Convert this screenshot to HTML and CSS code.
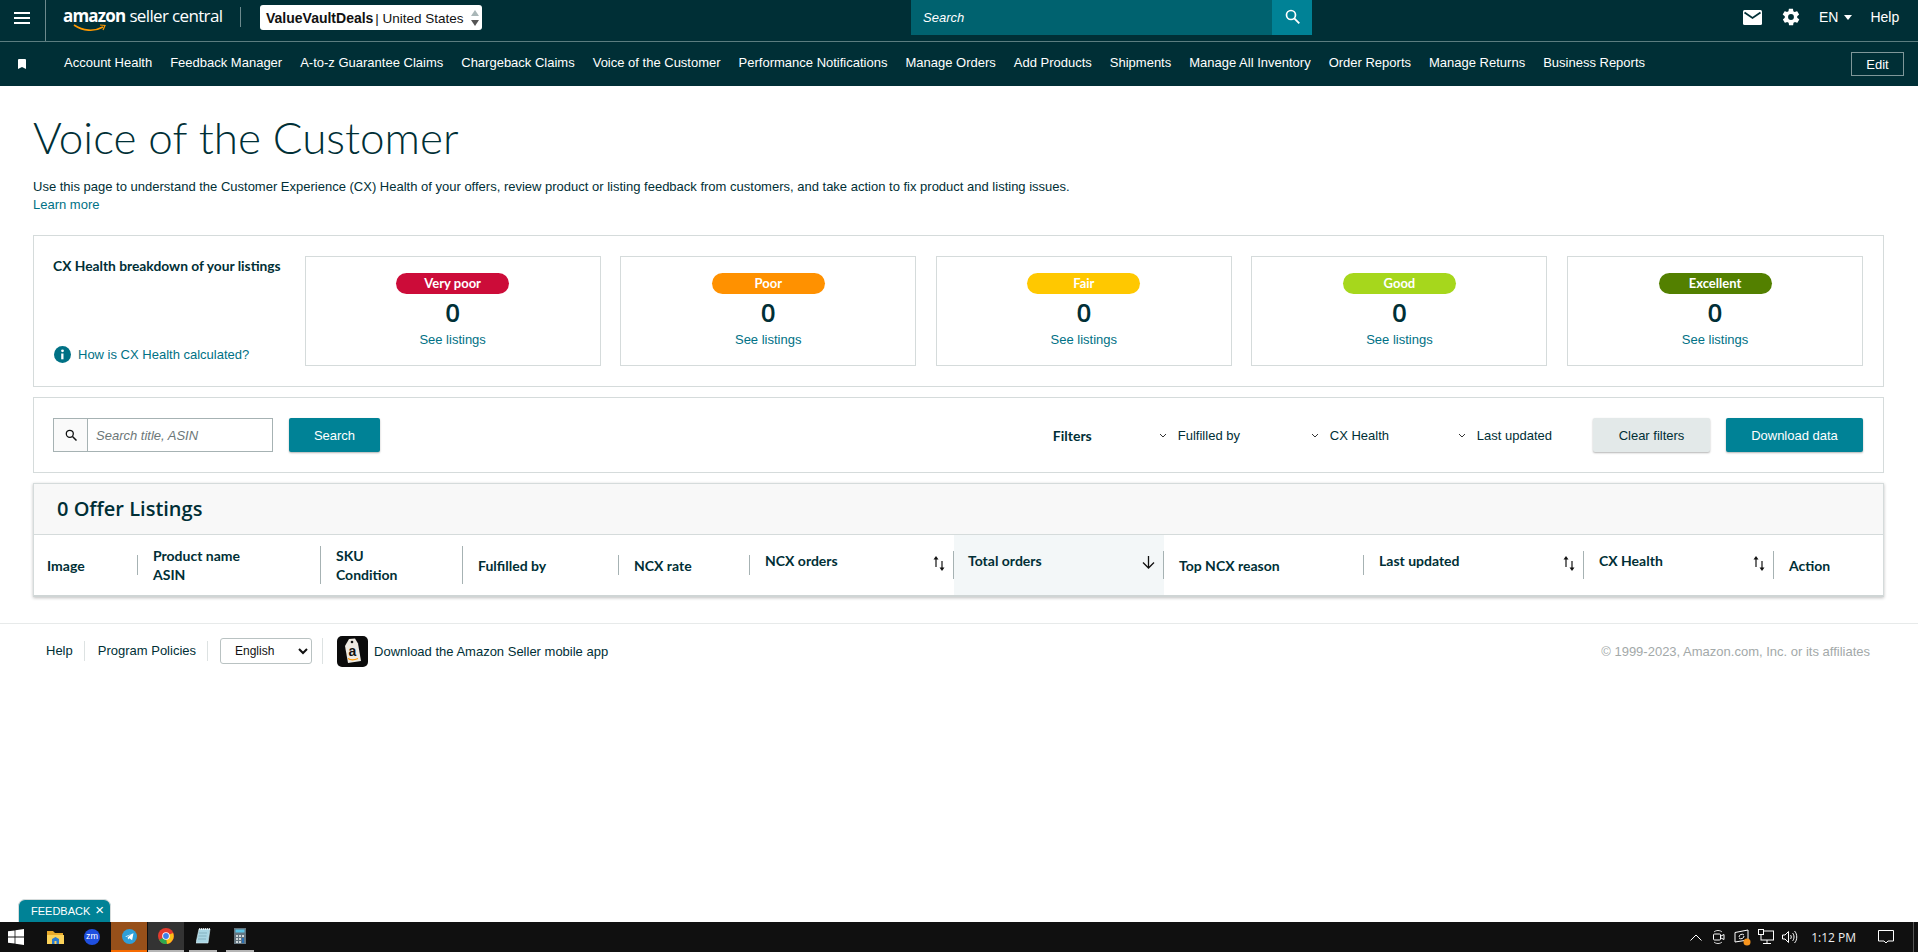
FILE: index.html
```html
<!DOCTYPE html>
<html lang="en">
  <head>
    <meta charset="UTF-8" />
    <title>Voice of the Customer</title>
    <link rel="stylesheet" href="styles.css">
  </head>
  <body>
    <header class="topbar">
      <div class="burger-cell">
        <svg class="burger" width="16" height="12" viewBox="0 0 16 12"><path d="M0 1h16M0 6h16M0 11h16" stroke="#fff" stroke-width="1.800"/></svg>
      </div>
      <div class="logo">
        <span class="logo-amazon">amazon</span>
        <span class="logo-seller">seller central</span>
        <svg class="logo-smile" width="33" height="8" viewBox="0 0 33 8"><path d="M1 1c9 6 20 7 29 2" fill="none" stroke="#f90" stroke-width="1.600"/><path d="M27 1l5 .5-2 4.500" fill="none" stroke="#f90" stroke-width="1.200"/></svg>
      </div>
      <div class="logo-divider"></div>
      <div class="account-select">
        <span><b>ValueVaultDeals</b> | United States</span>
        <span class="spinner">
          <svg width="8" height="6" viewBox="0 0 8 6"><path d="M4 0l4 6H0z" fill="#aab7b8"/></svg>
          <svg width="8" height="6" viewBox="0 0 8 6"><path d="M4 6L0 0h8z" fill="#555"/></svg>
        </span>
      </div>
      <div class="top-search">
        <div class="top-search-input">Search</div>
        <div class="top-search-btn">
          <svg width="15" height="15" viewBox="0 0 15 15"><circle cx="6" cy="6" r="4.500" fill="none" stroke="#fff" stroke-width="1.700"/><path d="M9.300 9.300l5 5" stroke="#fff" stroke-width="1.900"/></svg>
        </div>
      </div>
      <div class="top-right">
        <svg class="top-mail" width="19" height="15" viewBox="0 0 19 15"><rect width="19" height="15" rx="1.500" fill="#fff"/><path d="M1.500 2.500l8 5.500 8-5.500" fill="none" stroke="#002f36" stroke-width="1.800"/></svg>
        <svg class="top-gear" width="20" height="20" viewBox="0 0 24 24"><path fill="#fff" d="M19.400 13c0-.3.1-.6.1-1s0-.7-.1-1l2.100-1.600c.2-.2.2-.4.1-.6l-2-3.500c-.1-.2-.4-.3-.6-.2l-2.500 1c-.5-.4-1.100-.7-1.700-1l-.4-2.700c0-.2-.2-.4-.5-.4h-4c-.2 0-.5.2-.5.400l-.4 2.700c-.6.2-1.100.6-1.700 1l-2.500-1c-.2-.1-.5 0-.6.2l-2 3.500c-.1.2-.1.5.1.6L4.600 11c0 .3-.1.7-.1 1s0 .7.1 1l-2.100 1.600c-.2.2-.2.4-.1.6l2 3.500c.1.2.4.3.6.2l2.500-1c.5.4 1.100.7 1.700 1l.4 2.700c0 .2.2.4.5.4h4c.2 0 .5-.2.5-.4l.4-2.700c.6-.2 1.100-.6 1.700-1l2.500 1c.2.1.5 0 .6-.2l2-3.500c.1-.2.1-.5-.1-.6zM12 15.500a3.500 3.500 0 1 1 0-7 3.500 3.500 0 0 1 0 7z"/></svg>
        <span class="top-lang">EN</span>
        <span class="top-caret"></span>
        <span class="top-help">Help</span>
      </div>
    </header>

    <nav class="navbar">
      <svg class="nav-mark" width="8" height="10" viewBox="0 0 8 10"><path d="M0 1a1 1 0 0 1 1-1h6a1 1 0 0 1 1 1v9L4 8 0 10z" fill="#fff"/></svg>
      <div class="nav-links">
        <a>Account Health</a>
        <a>Feedback Manager</a>
        <a>A-to-z Guarantee Claims</a>
        <a>Chargeback Claims</a>
        <a>Voice of the Customer</a>
        <a>Performance Notifications</a>
        <a>Manage Orders</a>
        <a>Add Products</a>
        <a>Shipments</a>
        <a>Manage All Inventory</a>
        <a>Order Reports</a>
        <a>Manage Returns</a>
        <a>Business Reports</a>
      </div>
      <button class="edit-btn">Edit</button>
    </nav>

    <main class="content">
      <h1 class="page-title">Voice of the Customer</h1>
      <p class="page-desc">Use this page to understand the Customer Experience (CX) Health of your offers, review product or listing feedback from customers, and take action to fix product and listing issues.</p>
      <a class="link learn-more">Learn more</a>

      <section class="panel health-panel">
        <div class="health-side">
          <div class="health-title">CX Health breakdown of your listings</div>
          <a class="link health-help">
            <svg width="17" height="17" viewBox="0 0 17 17"><circle cx="8.500" cy="8.500" r="8.500" fill="#007185"/><circle cx="8.500" cy="4.800" r="1.400" fill="#fff"/><path d="M7.200 7.500h2.300v5.800H7.200z" fill="#fff"/></svg>
            How is CX Health calculated?
          </a>
        </div>
        <div class="health-cards">
          <div class="health-card">
            <span class="pill pill-verypoor">Very poor</span>
            <span class="health-count">0</span>
            <a class="link">See listings</a>
          </div>
          <div class="health-card">
            <span class="pill pill-poor">Poor</span>
            <span class="health-count">0</span>
            <a class="link">See listings</a>
          </div>
          <div class="health-card">
            <span class="pill pill-fair">Fair</span>
            <span class="health-count">0</span>
            <a class="link">See listings</a>
          </div>
          <div class="health-card">
            <span class="pill pill-good">Good</span>
            <span class="health-count">0</span>
            <a class="link">See listings</a>
          </div>
          <div class="health-card">
            <span class="pill pill-excellent">Excellent</span>
            <span class="health-count">0</span>
            <a class="link">See listings</a>
          </div>
        </div>
      </section>

      <section class="panel filter-panel">
        <div class="search-box">
          <span class="search-addon">
            <svg width="12" height="12" viewBox="0 0 12 12"><circle cx="4.800" cy="4.800" r="3.500" fill="none" stroke="#0f1111" stroke-width="1.300"/><path d="M7.500 7.500l4 4" stroke="#0f1111" stroke-width="1.500"/></svg>
          </span>
          <span class="search-hint">Search title, ASIN</span>
        </div>
        <button class="btn btn-teal btn-search">Search</button>
        <div class="filters">
          <span class="filters-label">Filters</span>
          <span class="filter filter-fulfilled"><svg width="8" height="5" viewBox="0 0 8 5"><path d="M1 1l3 3 3-3" fill="none" stroke="#333" stroke-width="1"/></svg>Fulfilled by</span>
          <span class="filter filter-health"><svg width="8" height="5" viewBox="0 0 8 5"><path d="M1 1l3 3 3-3" fill="none" stroke="#333" stroke-width="1"/></svg>CX Health</span>
          <span class="filter filter-updated"><svg width="8" height="5" viewBox="0 0 8 5"><path d="M1 1l3 3 3-3" fill="none" stroke="#333" stroke-width="1"/></svg>Last updated</span>
          <button class="btn btn-grey">Clear filters</button>
          <button class="btn btn-teal btn-download">Download data</button>
        </div>
      </section>

      <section class="listings">
        <div class="listings-head">0 Offer Listings</div>
        <div class="listings-cols">
          <div class="col"><div class="col-in col-short">Image</div></div>
          <div class="col"><div class="col-in col-tall">Product name<br>ASIN</div></div>
          <div class="col"><div class="col-in col-tall">SKU<br>Condition</div></div>
          <div class="col"><div class="col-in col-short">Fulfilled by</div></div>
          <div class="col"><div class="col-in col-short">NCX rate</div></div>
          <div class="col"><div class="col-in col-sort">NCX orders
            <svg class="sort-icon" width="12" height="15" viewBox="0 0 12 15"><path d="M3 2v9" stroke="#111" stroke-width="1.200"/><path d="M3 0l2.500 3.500h-5z" fill="#111"/><path d="M9 5v8" stroke="#111" stroke-width="1.200"/><path d="M9 15l-2.500-3.500h5z" fill="#111"/></svg>
          </div></div>
          <div class="col col-active"><div class="col-in col-sort">Total orders
            <svg class="sort-icon" width="13" height="13" viewBox="0 0 13 13"><path d="M6.500 0v12M1 6.500l5.500 5.500L12 6.500" fill="none" stroke="#111" stroke-width="1.300"/></svg>
          </div></div>
          <div class="col"><div class="col-in col-short">Top NCX reason</div></div>
          <div class="col"><div class="col-in col-sort">Last updated
            <svg class="sort-icon" width="12" height="15" viewBox="0 0 12 15"><path d="M3 2v9" stroke="#111" stroke-width="1.200"/><path d="M3 0l2.500 3.500h-5z" fill="#111"/><path d="M9 5v8" stroke="#111" stroke-width="1.200"/><path d="M9 15l-2.500-3.500h5z" fill="#111"/></svg>
          </div></div>
          <div class="col"><div class="col-in col-sort">CX Health
            <svg class="sort-icon" width="12" height="15" viewBox="0 0 12 15"><path d="M3 2v9" stroke="#111" stroke-width="1.200"/><path d="M3 0l2.500 3.500h-5z" fill="#111"/><path d="M9 5v8" stroke="#111" stroke-width="1.200"/><path d="M9 15l-2.500-3.500h5z" fill="#111"/></svg>
          </div></div>
          <div class="col col-last"><div class="col-in col-short">Action</div></div>
        </div>
      </section>
    </main>

    <footer class="footer">
      <a class="footer-link footer-help">Help</a>
      <a class="footer-link">Program Policies</a>
      <div class="footer-lang">
        <select class="lang-select"><option>English</option></select>
      </div>
      <svg class="app-icon" width="31" height="31" viewBox="0 0 31 31"><rect width="31" height="31" rx="5" fill="#0b0b0b"/><path d="M12 3l6-.5 3 5 3 17.500-13 2-3-17z" fill="#eeeae2"/><circle cx="15" cy="6" r="1.300" fill="#111"/><text class="app-icon-a" x="11.500" y="20">a</text><path d="M11 22.500c3 2 6 1.800 10 0" fill="none" stroke="#f90" stroke-width="1.300"/></svg>
      <a class="footer-app">Download the Amazon Seller mobile app</a>
      <span class="footer-copy">© 1999-2023, Amazon.com, Inc. or its affiliates</span>
    </footer>

    <div class="spacer"></div>

    <div class="taskbar-wrap">
      <div class="feedback-tab">FEEDBACK <span class="feedback-x">×</span></div>
      <div class="taskbar">
        <div class="task task-start">
          <svg width="16" height="16" viewBox="0 0 16 16"><path fill="#fff" d="M0 2.300l6.600-.9v6.200H0zM7.400 1.300L16 0v7.600H7.400zM0 8.400h6.600v6.200L0 13.700zM7.400 8.400H16V16l-8.600-1.200z"/></svg>
        </div>
        <div class="task task-folder">
          <svg width="17" height="15" viewBox="0 0 17 15"><path d="M0 1h6l2 2h8v11H0z" fill="#e6a92c"/><path d="M0 5h17v9H0z" fill="#fbd25a"/><path d="M5 14V9l3.500-2L12 9v5H9.500v-3h-2v3z" fill="#2a7bd1"/></svg>
        </div>
        <div class="task task-zoom">
          <span class="zm-icon">zm</span>
        </div>
        <div class="task task-telegram">
          <svg width="15" height="15" viewBox="0 0 15 15"><circle cx="7.500" cy="7.500" r="7.500" fill="#2f9fd8"/><path d="M3 7.500l8.500-3.300-1.400 7-2.700-2-1.400 1.300-.3-2.300 4-3.300-5 2.900z" fill="#fff"/></svg>
        </div>
        <div class="task task-chrome">
          <svg width="16" height="16" viewBox="0 0 16 16"><circle cx="8" cy="8" r="8" fill="#e33b2e"/><path d="M8 8L1 12a8 8 0 0 0 8 4z" fill="#2da94f"/><path d="M8 8l1 8a8 8 0 0 0 6-11z" fill="#fbc116"/><circle cx="8" cy="8" r="3.800" fill="#fff"/><circle cx="8" cy="8" r="2.900" fill="#3f7fe8"/></svg>
        </div>
        <div class="task task-notepad">
          <svg width="15" height="16" viewBox="0 0 15 16"><path d="M3 1h11l-2 14H0z" fill="#a9d6e4" stroke="#d8eef4" stroke-width=".6"/><path d="M3 1h11" stroke="#fff" stroke-width="1.500" stroke-dasharray="1 1"/><path d="M3 5h8M2.500 8h8M2 11h8" stroke="#6f9aa8" stroke-width=".6"/></svg>
        </div>
        <div class="task task-calc">
          <svg width="12" height="16" viewBox="0 0 12 16"><rect width="12" height="16" fill="#63747f"/><rect x="1.500" y="1.500" width="9" height="3" fill="#5cc4e6"/><path d="M2 7h2v2H2zM5 7h2v2H5zM8 7h2v2H8zM2 10h2v2H2zM5 10h2v2H5zM2 13h2v2H2zM5 13h2v2H5z" fill="#cfd8dc"/><path d="M8 10h2v5H8z" fill="#2a6fb3"/></svg>
        </div>
        <div class="tray">
          <svg class="tray-chevron" width="12" height="7" viewBox="0 0 12 7"><path d="M.5 6.500L6 1l5.500 5.500" fill="none" stroke="#fff" stroke-width="1"/></svg>
          <svg class="tray-cam" width="12" height="16" viewBox="0 0 12 16"><path d="M1 3c2-2 6-2 8 0M1 13c2 2 6 2 8 0" fill="none" stroke="#ddd" stroke-width="1"/><rect x=".5" y="5" width="7" height="6" rx="1" fill="none" stroke="#fff"/><path d="M8 7l3-1.500v5L8 9" fill="none" stroke="#fff"/></svg>
          <svg class="tray-sync" width="17" height="17" viewBox="0 0 17 17"><path d="M1 3.500L14 1v10L1 13z" fill="none" stroke="#fff" stroke-width="1"/><path d="M5 8a3 3 0 0 1 5-2M10 7a3 3 0 0 1-5 2" fill="none" stroke="#fff"/><circle cx="13" cy="13" r="3.500" fill="#f7941d"/></svg>
          <svg class="tray-net" width="16" height="16" viewBox="0 0 16 16"><rect x="3" y="2" width="12.500" height="9" fill="none" stroke="#fff"/><rect x=".5" y=".5" width="5" height="5" fill="#101010" stroke="#fff"/><path d="M9 11v3M5 14.500h8" stroke="#fff"/></svg>
          <svg class="tray-vol" width="16" height="14" viewBox="0 0 16 14"><path d="M.5 5v4h2.500l3.500 3.500v-11L3 5z" fill="none" stroke="#fff"/><path d="M8.500 5c1 1 1 3 0 4M10.500 3c2 2 2 6 0 8M12.500 1c3 3 3 9 0 12" fill="none" stroke="#fff"/></svg>
          <span class="tray-time">1:12 PM</span>
          <svg class="tray-note" width="16" height="14" viewBox="0 0 16 14"><path d="M.5.500h15v10.500H10l-2 2-2-2H.5z" fill="none" stroke="#fff"/></svg>
          <span class="tray-end"></span>
        </div>
      </div>
    </div>
  </body>
</html>
```

FILE: styles.css
```css
* {
  box-sizing: border-box;
}

html,
body {
  height: 100%;
}

body {
  margin: 0;
  display: flex;
  flex-direction: column;
  height: 952px;
  overflow: hidden;
  background: #fff;
  color: #002f36;
  font-family: "Liberation Sans", Arial, sans-serif;
  font-size: 13px;
}

/* top bar */
.topbar {
  display: flex;
  align-items: flex-start;
  height: 42px;
  background: #002f36;
  border-bottom: 1px solid #5c7d80;
  color: #fff;
}

.burger-cell {
  width: 46px;
  height: 41px;
  padding: 12px 0 0 14px;
  border-right: 1px solid #6d8a8d;
}

.burger {
  display: block;
}

.logo {
  position: relative;
  display: flex;
  align-items: baseline;
  gap: 4px;
  width: 159px;
  margin: 4px 0 0 17px;
  white-space: nowrap;
}

.logo-amazon {
  font-family: "Open Sans", sans-serif;
  font-size: 17px;
  font-weight: 700;
  letter-spacing: -0.8px;
}

.logo-seller {
  font-family: "Open Sans", sans-serif;
  font-size: 17px;
  font-weight: 400;
  letter-spacing: -0.65px;
}

.logo-smile {
  position: absolute;
  left: 10px;
  top: 20px;
}

.logo-divider {
  width: 1px;
  height: 20px;
  margin: 7px 19px 0 18px;
  background: #6d8a8d;
}

.account-select {
  display: flex;
  align-items: center;
  justify-content: space-between;
  width: 222px;
  height: 25px;
  margin-top: 5px;
  padding: 0 3px 0 6px;
  background: #fff;
  border-radius: 3px;
  color: #111;
  font-size: 13.5px;
  white-space: nowrap;
}

.account-select b {
  margin-right: -2px;
  font-size: 14px;
  font-weight: 700;
}

.spinner {
  display: flex;
  flex-direction: column;
  gap: 4px;
}

.spinner svg {
  display: block;
}

.top-search {
  display: flex;
  height: 35px;
  margin-left: 429px;
}

.top-search-input {
  width: 361px;
  padding: 10px 0 0 12px;
  background: #00626f;
  font-style: italic;
}

.top-search-btn {
  width: 40px;
  padding: 9px 0 0 13px;
  background: #008296;
}

.top-right {
  display: flex;
  align-items: center;
  height: 34px;
  margin-left: 431px;
  font-size: 14px;
}

.top-gear {
  margin-left: 19px;
}

.top-lang {
  margin-left: 18px;
}

.top-caret {
  width: 0;
  height: 0;
  margin-left: 6px;
  border-top: 5px solid #fff;
  border-left: 4px solid transparent;
  border-right: 4px solid transparent;
}

.top-help {
  margin-left: 18px;
}

/* nav */
.navbar {
  display: flex;
  align-items: center;
  height: 44px;
  padding: 0 14px 0 18px;
  background: #002f36;
  color: #fff;
}

.nav-links {
  display: flex;
  gap: 18px;
  flex: 1;
  margin-left: 38px;
  padding-bottom: 3px;
  white-space: nowrap;
}

.edit-btn {
  width: 53px;
  height: 24px;
  background: transparent;
  border: 1px solid #7f9799;
  color: #fff;
  font: 13px "Liberation Sans", Arial, sans-serif;
}

/* page */
.content {
  padding: 0 34px 0 33px;
}

.page-title {
  margin: 24px 0 0;
  font-family: Lato, sans-serif;
  font-size: 44px;
  font-weight: 300;
  line-height: 54px;
  color: #002f36;
}

.page-desc {
  margin: 14px 0 0;
  line-height: 18px;
}

.link {
  color: #007185;
}

.learn-more {
  display: block;
  line-height: 18px;
}

.panel {
  border: 1px solid #d5dbdb;
}

.health-panel {
  display: flex;
  height: 152px;
  margin-top: 21px;
  padding: 20px 20px 20px 19px;
}

.health-side {
  display: flex;
  flex-direction: column;
  justify-content: space-between;
  width: 253.5px;
  padding-bottom: 3px;
}

.health-title {
  padding-top: 1px;
  font-family: Lato, sans-serif;
  font-size: 13.8px;
  font-weight: 700;
}

.health-help {
  display: flex;
  align-items: center;
  gap: 7px;
  padding-left: 1px;
}

.health-cards {
  display: grid;
  grid-template-columns: repeat(5, 296px);
  gap: 19.6px;
}

.health-card {
  display: flex;
  flex-direction: column;
  align-items: center;
  height: 110px;
  padding-top: 16px;
  border: 1px solid #d5dbdb;
}

.pill {
  width: 113px;
  height: 21px;
  border-radius: 11px;
  font-family: Lato, sans-serif;
  font-size: 13px;
  font-weight: 700;
  line-height: 21px;
  text-align: center;
  color: #fff;
}

.pill-verypoor { background: #cc0c39; }
.pill-poor { background: #ff9100; }
.pill-fair { background: #ffc800; }
.pill-good { background: #a6d71c; }
.pill-excellent { background: #538000; }

.health-count {
  margin-top: 1px;
  font-family: "Open Sans", sans-serif;
  font-size: 26px;
  font-weight: 600;
  line-height: 34px;
}

.health-card .link {
  margin-top: 3px;
}

.filter-panel {
  display: flex;
  align-items: center;
  height: 76px;
  margin-top: 10px;
  padding: 0 20px 0 19px;
}

.search-box {
  display: flex;
  width: 220px;
  height: 34px;
  border: 1px solid #a6b2b3;
}

.search-addon {
  display: flex;
  align-items: center;
  justify-content: center;
  width: 34px;
  background: #fafafa;
  border-right: 1px solid #a6b2b3;
}

.search-hint {
  padding: 9px 0 0 8px;
  font-style: italic;
  color: #6c7778;
}

.btn {
  height: 34px;
  border: none;
  border-radius: 2px;
  box-shadow: 0 1px 2px rgba(0, 0, 0, 0.3);
  font: 13px "Liberation Sans", Arial, sans-serif;
}

.btn-teal {
  background: #008296;
  color: #fff;
}

.btn-grey {
  width: 117px;
  margin-left: 41px;
  background: #e3e9e9;
  color: #002f36;
}

.btn-search {
  width: 91px;
  margin-left: 16px;
}

.btn-download {
  width: 137px;
  margin-left: 16px;
}

.filters {
  display: flex;
  align-items: center;
  margin-left: auto;
}

.filters-label {
  width: 106px;
  font-family: Lato, sans-serif;
  font-size: 14px;
  font-weight: 700;
}

.filter {
  display: flex;
  align-items: center;
  gap: 11px;
}

.filter-fulfilled { width: 152px; }
.filter-health { width: 147px; }

.listings {
  margin-top: 10px;
  border: 1px solid #d5dbdb;
  border-bottom: 2px solid #cfd5d5;
  box-shadow: 0 1px 3px rgba(0, 0, 0, 0.25);
}

.listings-head {
  height: 51px;
  padding-left: 23px;
  background: #f8f8f8;
  border-bottom: 1px solid #d5dbdb;
  font-family: "Open Sans", sans-serif;
  font-size: 20px;
  font-weight: 600;
  line-height: 50px;
}

.listings-cols {
  display: grid;
  grid-template-columns: 104px 183px 142px 156px 131px 204px 210px 200px 220px 190px 109px;
  height: 60px;
  font-family: Lato, sans-serif;
  font-size: 14px;
  font-weight: 700;
}

.col {
  display: flex;
  align-items: center;
}

.col:first-child .col-in {
  padding-left: 13px;
}

.col-active {
  align-self: stretch;
  background: #f3f7f8;
}

.col-in {
  display: flex;
  align-items: center;
  width: 100%;
  padding: 0 14px 0 15px;
  line-height: 19px;
  border-right: 1px solid #a6b2b3;
}

.col-last .col-in {
  border-right: none;
}

.col-short {
  height: 20px;
}

.col-tall {
  display: block;
  height: 38px;
}

.col-sort {
  align-items: flex-start;
  justify-content: space-between;
  height: 28px;
  padding-right: 8px;
}

.col-active .col-in {
  padding-left: 14px;
}

.sort-icon {
  margin-top: 5px;
}

/* footer */
.footer {
  display: flex;
  align-items: center;
  height: 55px;
  margin-top: 26px;
  padding: 0 48px 0 46px;
  border-top: 1px solid #e7eaea;
}

.footer-link {
  padding-right: 11px;
  margin-right: 12px;
  border-right: 1px solid #dde2e2;
  line-height: 20px;
}

.footer-help {
  margin-right: 13px;
}

.footer-lang {
  padding-right: 10px;
  margin: 0 14px 0 0;
  border-right: 1px solid #dde2e2;
}

.lang-select {
  display: block;
  width: 92px;
  height: 26px;
  background: #fff;
  border: 1px solid #b9c2c2;
  border-radius: 3px;
  color: #111;
  padding-left: 10px;
  font: 12px "Liberation Sans", Arial, sans-serif;
}

.app-icon {
  margin-right: 6px;
}

.app-icon-a {
  font-family: "Liberation Sans", Arial, sans-serif;
  font-size: 14px;
  font-weight: 700;
  fill: #111;
}

.footer-copy {
  margin-left: auto;
  color: #a3a9a9;
}

.spacer {
  flex: 1;
}

/* taskbar */
.taskbar-wrap {
  position: relative;
}

.feedback-tab {
  position: absolute;
  left: 18px;
  bottom: 30px;
  width: 93px;
  height: 23px;
  padding: 0 0 0 12px;
  background: #008296;
  border: 1px solid #d5dbdb;
  border-bottom: none;
  border-radius: 7px 7px 0 0;
  color: #fff;
  font-size: 11px;
  line-height: 22px;
  white-space: nowrap;
}

.feedback-x {
  margin-left: 2px;
  font-size: 15px;
  line-height: 0;
}

.taskbar {
  display: flex;
  height: 30px;
  background: #101010;
}

.task {
  display: flex;
  align-items: center;
  justify-content: center;
  height: 30px;
}

.task-start { width: 32px; }
.task-folder { width: 46px; }

.task-zoom {
  width: 28px;
  margin-right: 5px;
}

.zm-icon {
  flex: none;
  width: 16px;
  height: 16px;
  border-radius: 50%;
  background: #1f4fe0;
  color: #fff;
  font-size: 9px;
  line-height: 15px;
  text-align: center;
}

.task-telegram {
  width: 36px;
  margin-right: 1px;
  background: #97501a;
  border-bottom: 2px solid #f76b00;
}

.task-chrome {
  width: 36px;
  margin-right: 5px;
  background: #333;
  border-bottom: 2px solid #b5b5b5;
}

.task-notepad {
  width: 28px;
  margin-right: 9px;
  border-bottom: 2px solid #b5b5b5;
}

.task-calc {
  width: 28px;
  border-bottom: 2px solid #b5b5b5;
}

.tray {
  display: flex;
  align-items: center;
  margin-left: auto;
  color: #fff;
}

.tray-chevron { margin-right: 11px; }
.tray-cam { margin-right: 9px; }
.tray-sync { margin-right: 7px; }
.tray-net { margin-right: 8px; }
.tray-vol { margin-right: 13px; }

.tray-time {
  margin-right: 22px;
  font-family: "Open Sans", sans-serif;
  font-size: 12px;
  color: #eee;
}

.tray-note {
  margin-right: 19px;
}

.tray-end {
  width: 1px;
  height: 30px;
  margin-right: 4px;
  background: #555;
}
```
